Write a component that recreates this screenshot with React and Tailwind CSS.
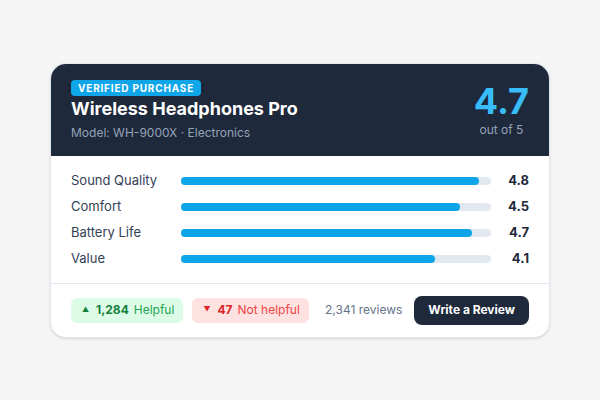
export default function App() {
    const ratings = [
        { label: 'Sound Quality', value: 4.8, pct: 96 },
        { label: 'Comfort', value: 4.5, pct: 90 },
        { label: 'Battery Life', value: 4.7, pct: 94 },
        { label: 'Value', value: 4.1, pct: 82 },
    ];

    return (
        <div className="w-[600px] h-[400px] bg-[#f5f5f5] flex items-center justify-center font-['Inter',sans-serif]">
            <div className="w-[500px] bg-white rounded-2xl border border-[#e2e8f0] shadow-sm overflow-hidden">
                {/* Header */}
                <div className="bg-[#1e293b] px-5 pt-4 pb-[15px] flex items-center justify-between">
                    <div>
                        <div className="w-fit bg-[#0ea5e9] text-white text-[10px] font-bold uppercase tracking-[0.08em] leading-4 px-[7px] rounded">
                            Verified Purchase
                        </div>
                        <h2 className="text-white text-lg font-bold leading-6 mt-px">Wireless Headphones Pro</h2>
                        <div className="text-[#94a3b8] text-xs leading-4 mt-1">Model: WH-9000X · Electronics</div>
                    </div>
                    <div className="flex flex-col items-center">
                        <div className="text-[#38bdf8] text-4xl font-bold leading-none">4.7</div>
                        <div className="text-[#94a3b8] text-xs leading-4 mt-[3px]">out of 5</div>
                    </div>
                </div>

                {/* Ratings */}
                <div className="px-5 pt-[15px] pb-[14px] flex flex-col gap-[6px] border-b border-[#e2e8f0]">
                    {ratings.map((r) => (
                        <div key={r.label} className="flex items-center h-5">
                            <span className="w-[110px] text-[13px] text-[#334155]">{r.label}</span>
                            <div className="flex-1 h-2 bg-[#e2e8f0] rounded-full">
                                <div className="h-2 bg-[#0ea5e9] rounded-full" style={{ width: `${r.pct}%` }}></div>
                            </div>
                            <span className="w-[38px] text-right text-[13px] font-bold text-[#1e293b]">{r.value}</span>
                        </div>
                    ))}
                </div>

                {/* Footer */}
                <div className="px-5 py-3 flex items-center whitespace-nowrap">
                    <div className="flex items-center gap-[9px] shrink-0">
                        <div className="h-[25px] flex items-center bg-[#dcfce7] rounded-md pl-[11px] pr-[9px] text-xs">
                            <span className="text-[#15803d] text-[7px] mr-[7px]">▲</span>
                            <span className="font-bold text-[#15803d]">1,284</span>
                            <span className="text-[#22a352] ml-[5px]">Helpful</span>
                        </div>
                        <div className="h-[25px] flex items-center bg-[#fee2e2] rounded-md pl-[11px] pr-[9px] text-xs">
                            <span className="text-[#dc2626] text-[7px] mr-[7px]">▼</span>
                            <span className="font-bold text-[#dc2626]">47</span>
                            <span className="text-[#ef4444] ml-[5px]">Not helpful</span>
                        </div>
                    </div>
                    <div className="ml-auto flex items-center gap-3 shrink-0">
                        <span className="text-xs text-[#64748b]">2,341 reviews</span>
                        <button className="h-[29px] px-[14px] bg-[#1e293b] text-white text-xs font-bold rounded-lg">
                            Write a Review
                        </button>
                    </div>
                </div>
            </div>
        </div>
    );
}
